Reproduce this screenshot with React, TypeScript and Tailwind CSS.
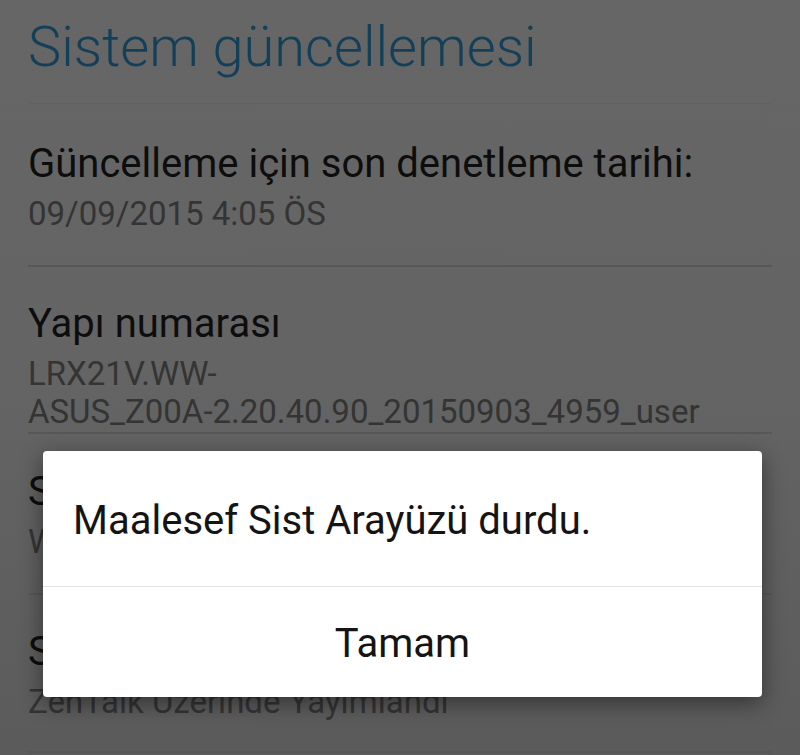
import React from "react";

type Row = { title: string; value: string[]; box: string };

const rows: Row[] = [
  {
    title: "Güncelleme için son denetleme tarihi:",
    value: ["09/09/2015 4:05 ÖS"],
    box: "h-[163px] pt-[36px]",
  },
  {
    title: "Yapı numarası",
    value: ["LRX21V.WW-", "ASUS_Z00A-2.20.40.90_20150903_4959_user"],
    box: "h-[167px] pt-[33px]",
  },
  { title: "Sürüm notları", value: ["WW-2.20.40.90"], box: "h-[161px] pt-[34px]" },
  { title: "Sorun bildirimi", value: ["ZenTalk Üzerinde Yayımlandı"], box: "h-[158px] pt-[33px]" },
];

export default function App() {
  return (
    <div
      className="relative w-[800px] h-[755px] overflow-hidden bg-gradient-to-b from-[#666666] via-[#646464] to-[#5b5b5b]"
      style={{ fontFamily: "Roboto, 'Noto Sans', sans-serif" }}
    >
      <div className="px-[28px]">
        <h1 className="h-[104px] pt-[15px] text-[56px] leading-[64px] font-light text-[#143f58] border-b border-[#616161]">
          Sistem güncellemesi
        </h1>

        {rows.map((row) => (
          <div key={row.title} className={`${row.box} border-b-2 border-[#575757]`}>
            <div className="text-[40px] leading-[48px] text-[#0d0d0d] whitespace-nowrap">{row.title}</div>
            <div className="mt-[7px]">
              {row.value.map((v) => (
                <div key={v} className="text-[33px] leading-[38px] text-[#343434] whitespace-nowrap">
                  {v}
                </div>
              ))}
            </div>
          </div>
        ))}
      </div>

      {/* error dialog over the dimmed settings page */}
      <div className="absolute left-[43px] top-[451px] w-[719px] h-[246px] rounded-[4px] bg-white shadow-[0_6px_22px_rgba(0,0,0,0.45)] flex flex-col">
        <div className="h-[135px] pt-[46px] px-[30px] text-[40px] leading-[48px] text-[#141414] whitespace-nowrap">
          Maalesef Sist Arayüzü durdu.
        </div>
        <div className="h-px bg-[#e3e3e3]" />
        <div className="flex-1 pt-[33px] text-center text-[40px] leading-[48px] text-[#141414]">
          Tamam
        </div>
      </div>
    </div>
  );
}
